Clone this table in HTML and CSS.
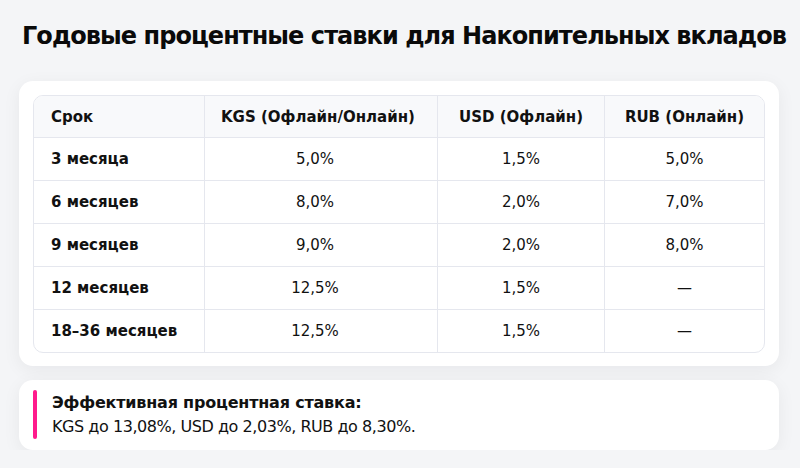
FILE: index.html
```html
<!DOCTYPE html>
<html lang="ru">
<head>
<meta charset="utf-8">
<title>Годовые процентные ставки</title>
<link rel="stylesheet" href="styles.css">
</head>
<body>
<main class="page">
  <h1 class="title">Годовые процентные ставки для Накопительных вкладов</h1>
  <section class="card">
    <table class="rates">
      <colgroup>
        <col class="c1"><col class="c2"><col class="c3"><col class="c4">
      </colgroup>
      <thead>
        <tr>
          <th class="term">Срок</th>
          <th class="kgs">KGS (Офлайн/Онлайн)</th>
          <th>USD (Офлайн)</th>
          <th>RUB (Онлайн)</th>
        </tr>
      </thead>
      <tbody>
        <tr><td class="term">3 месяца</td><td class="kgs">5,0%</td><td>1,5%</td><td>5,0%</td></tr>
        <tr><td class="term">6 месяцев</td><td class="kgs">8,0%</td><td>2,0%</td><td>7,0%</td></tr>
        <tr><td class="term">9 месяцев</td><td class="kgs">9,0%</td><td>2,0%</td><td>8,0%</td></tr>
        <tr><td class="term">12 месяцев</td><td class="kgs">12,5%</td><td>1,5%</td><td>—</td></tr>
        <tr><td class="term">18–36 месяцев</td><td class="kgs">12,5%</td><td>1,5%</td><td>—</td></tr>
      </tbody>
    </table>
  </section>
  <section class="card note">
    <div class="bar"></div>
    <div class="note-text">
      <div class="note-title">Эффективная процентная ставка:</div>
      <div class="note-body">KGS до 13,08%, USD до 2,03%, RUB до 8,30%.</div>
    </div>
  </section>
</main>
</body>
</html>
```

FILE: styles.css
```css
html, body {
  margin: 0;
  padding: 0;
}
body {
  background: #f4f5f7;
  font-family: "DejaVu Sans", "Noto Sans", sans-serif;
  color: #111;
}
.page {
  padding: 22px 21px 0 19px;
}
.title {
  margin: 0 -21px 30px -19px;
  padding-left: 8px;
  font-size: 24px;
  line-height: 29px;
  font-weight: bold;
  letter-spacing: -0.95px;
  text-align: center;
  color: #0a0a0a;
  white-space: nowrap;
}
.card {
  background: #fff;
  border-radius: 14px;
  padding: 14px 14px 13px;
  box-shadow: 0 4px 18px rgba(20, 24, 40, 0.06);
}
.rates {
  width: 100%;
  border-collapse: separate;
  border-spacing: 0;
  border: 1px solid #e5e7ee;
  border-radius: 10px;
  overflow: hidden;
  font-size: 15px;
  table-layout: fixed;
}
.c1 { width: 171px; }
.c2 { width: 233px; }
.c3 { width: 167px; }
.c4 { width: auto; }
.rates th, .rates td {
  height: 42px;
  padding: 0 16px;
  text-align: center;
  vertical-align: middle;
  border-right: 1px solid #e5e7ee;
  border-bottom: 1px solid #e5e7ee;
  white-space: nowrap;
}
.rates thead th {
  height: 41px;
  background: #f8f9fb;
  font-weight: bold;
}
.rates th:last-child, .rates td:last-child {
  border-right: none;
}
.rates tbody tr:last-child td {
  border-bottom: none;
}
.rates .term {
  text-align: left;
  padding-left: 17px;
  font-weight: bold;
}
.rates .kgs {
  padding-right: 28px;
}
.note {
  margin-top: 14px;
  display: flex;
  gap: 15px;
  padding: 10px 14px 11px 14px;
}
.bar {
  width: 4px;
  border-radius: 2px;
  background: #ff1a8c;
  flex: none;
}
.note-text {
  font-size: 16px;
  line-height: 24px;
  padding-top: 1px;
}
.note-title {
  font-weight: bold;
  letter-spacing: -0.2px;
}
.note-body {
  letter-spacing: -0.45px;
}
```
